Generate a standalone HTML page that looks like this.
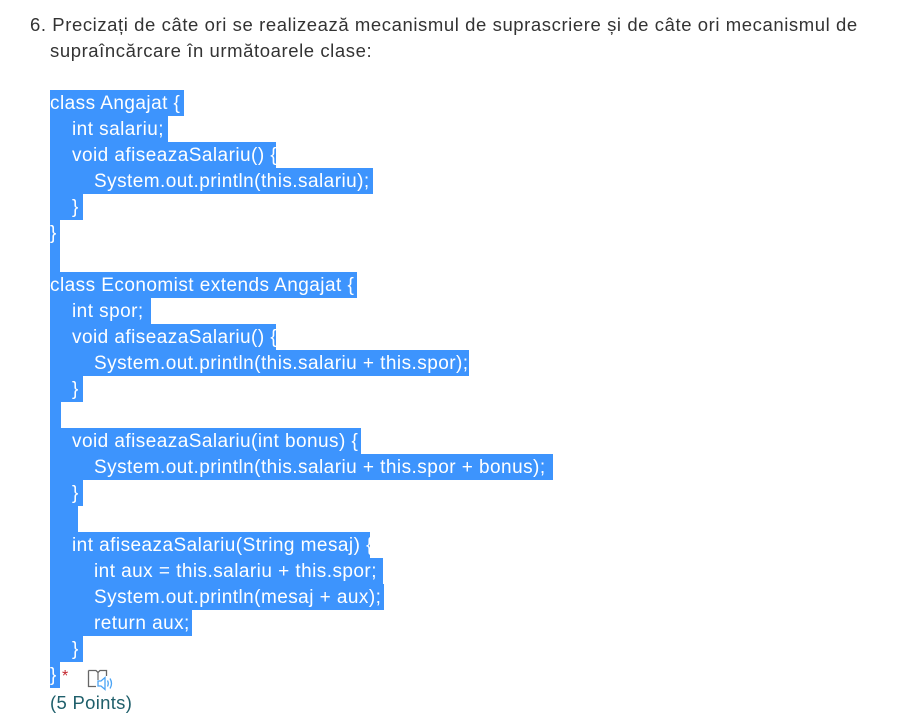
<!DOCTYPE html>
<html><head><meta charset="utf-8"><style>
body{margin:0;width:902px;height:717px;background:#fff;font-family:"Liberation Sans",sans-serif;position:relative;overflow:hidden}
.h{position:absolute;left:30px;font-size:18.5px;color:#333;white-space:nowrap;letter-spacing:0.58px}
.l{position:absolute;left:50px;height:26px;background:#3d94fd;color:#fff;font-size:19px;line-height:27px;white-space:nowrap;letter-spacing:0.45px}
.i1{padding-left:22px;box-sizing:border-box}
.i2{padding-left:44px;box-sizing:border-box}
</style></head><body>
<div class="h" style="top:14px">6.&nbsp;Precizați de câte ori se realizează mecanismul de suprascriere și de câte ori mecanismul de</div>
<div class="h" style="top:40px;left:50px">supraîncărcare în următoarele clase:</div>

<div class="l" style="top:90px;width:134px">class Angajat {</div>
<div class="l i1" style="top:116px;width:118px">int salariu;</div>
<div class="l i1" style="top:142px;width:226px">void afiseazaSalariu() {</div>
<div class="l i2" style="top:168px;width:323px">System.out.println(this.salariu);</div>
<div class="l i1" style="top:194px;width:33px">}</div>
<div class="l" style="top:220px;width:10px">}</div>
<div class="l" style="top:246px;width:10px"></div>
<div class="l" style="top:272px;width:307px">class Economist extends Angajat {</div>
<div class="l i1" style="top:298px;width:101px">int spor;</div>
<div class="l i1" style="top:324px;width:226px">void afiseazaSalariu() {</div>
<div class="l i2" style="top:350px;width:419px">System.out.println(this.salariu + this.spor);</div>
<div class="l i1" style="top:376px;width:33px">}</div>
<div class="l" style="top:402px;width:11px"></div>
<div class="l i1" style="top:428px;width:311px">void afiseazaSalariu(int bonus) {</div>
<div class="l i2" style="top:454px;width:503px">System.out.println(this.salariu + this.spor + bonus);</div>
<div class="l i1" style="top:480px;width:33px">}</div>
<div class="l" style="top:506px;width:28px"></div>
<div class="l i1" style="top:532px;width:320px">int afiseazaSalariu(String mesaj) {</div>
<div class="l i2" style="top:558px;width:333px">int aux = this.salariu + this.spor;</div>
<div class="l i2" style="top:584px;width:334px">System.out.println(mesaj + aux);</div>
<div class="l i2" style="top:610px;width:142px">return aux;</div>
<div class="l i1" style="top:636px;width:33px">}</div>
<div class="l" style="top:662px;width:10px">}</div>
<div style="position:absolute;left:62px;top:668px;color:#c4262e;font-size:16px">*</div>
<svg style="position:absolute;left:87px;top:668px" width="28" height="24" viewBox="0 0 28 24">
<path d="M1.5 2.5 H9 L11 4.5 L13 2.5 H19.5 V8 M1.5 2.5 V18.5 H9" fill="none" stroke="#666" stroke-width="1.3"/>
<path d="M11 4.5 V12" stroke="#666" stroke-width="1.2"/>
<path d="M11 13 H14 L18 9.5 V21.5 L14 18 H11 Z" fill="none" stroke="#4aa3f5" stroke-width="1.3"/>
<path d="M20.5 12.5 Q22 15.5 20.5 18.5 M23 10.5 Q26 15.5 23 20.5" fill="none" stroke="#4aa3f5" stroke-width="1.3"/>
</svg>
<div style="position:absolute;left:50px;top:692px;color:#1f5f6b;font-size:18.5px;letter-spacing:0.3px">(5 Points)</div>
</body></html>
